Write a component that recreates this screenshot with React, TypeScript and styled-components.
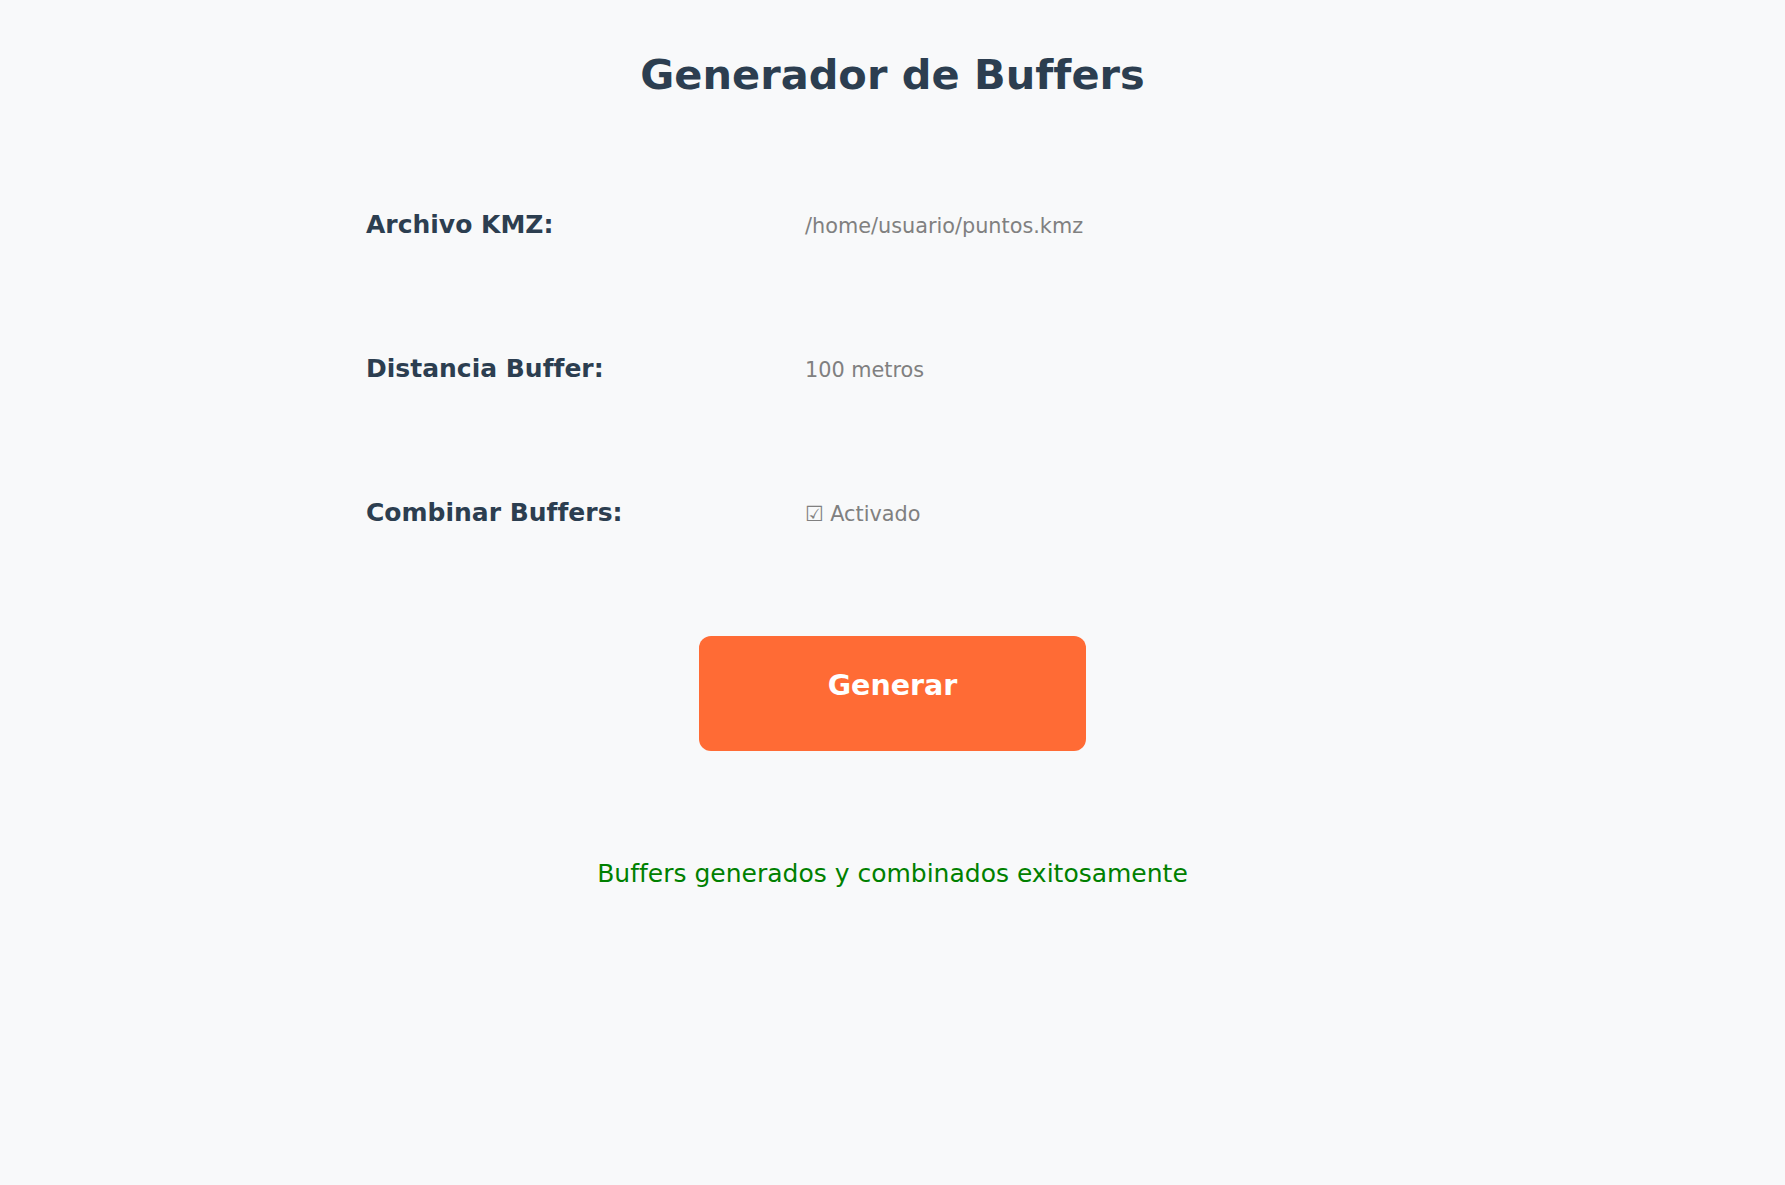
import styled, { createGlobalStyle } from "styled-components";

const GlobalStyle = createGlobalStyle`
  html, body {
    margin: 0;
    padding: 0;
    background: #f8f9fa;
  }
  body {
    font-family: "DejaVu Sans", "Liberation Sans", sans-serif;
    font-variant-ligatures: none;
  }
`;

const fields = [
  { label: "Archivo KMZ:", value: "/home/usuario/puntos.kmz" },
  { label: "Distancia Buffer:", value: "100 metros" },
  { label: "Combinar Buffers:", value: "☑ Activado" },
];

const App = () => (
  <>
    <GlobalStyle />
    <Page>
      <Title>Generador de Buffers</Title>
      <Form>
        {fields.map((f) => (
          <Row key={f.label}>
            <Label>{f.label}</Label>
            <Value>{f.value}</Value>
          </Row>
        ))}
      </Form>
      <GenerateButton type="button">Generar</GenerateButton>
      <Status>Buffers generados y combinados exitosamente</Status>
    </Page>
  </>
);

export default App;

const Page = styled.main`
  min-height: 1185px;
  box-sizing: border-box;
  padding-top: 49.5px;
  display: flex;
  flex-direction: column;
  align-items: center;
  background: #f8f9fa;
`;

const Title = styled.h1`
  margin: 0;
  font-size: 41.5px;
  font-weight: bold;
  line-height: normal;
  color: #2c3e50;
`;

const Form = styled.div`
  width: 1053px;
  margin-top: 111.5px;
  display: flex;
  flex-direction: column;
  gap: 115px;
`;

const Row = styled.div`
  display: grid;
  grid-template-columns: 439px 1fr;
  align-items: baseline;
`;

const Label = styled.span`
  font-size: 25px;
  font-weight: bold;
  line-height: normal;
  color: #2c3e50;
`;

const Value = styled.span`
  font-size: 20.8px;
  line-height: normal;
  color: #808080;
`;

const GenerateButton = styled.button`
  margin-top: 109px;
  width: 387px;
  height: 115px;
  box-sizing: border-box;
  padding: 32.5px 0 0;
  display: flex;
  justify-content: center;
  align-items: flex-start;
  border: none;
  border-radius: 12px;
  background: #ff6b35;
  color: #ffffff;
  font-family: "DejaVu Sans", "Liberation Sans", sans-serif;
  font-variant-ligatures: none;
  font-size: 28.5px;
  font-weight: bold;
  line-height: normal;
  cursor: pointer;
`;

const Status = styled.p`
  margin: 108px 0 0;
  font-size: 25px;
  line-height: normal;
  color: #008000;
`;
